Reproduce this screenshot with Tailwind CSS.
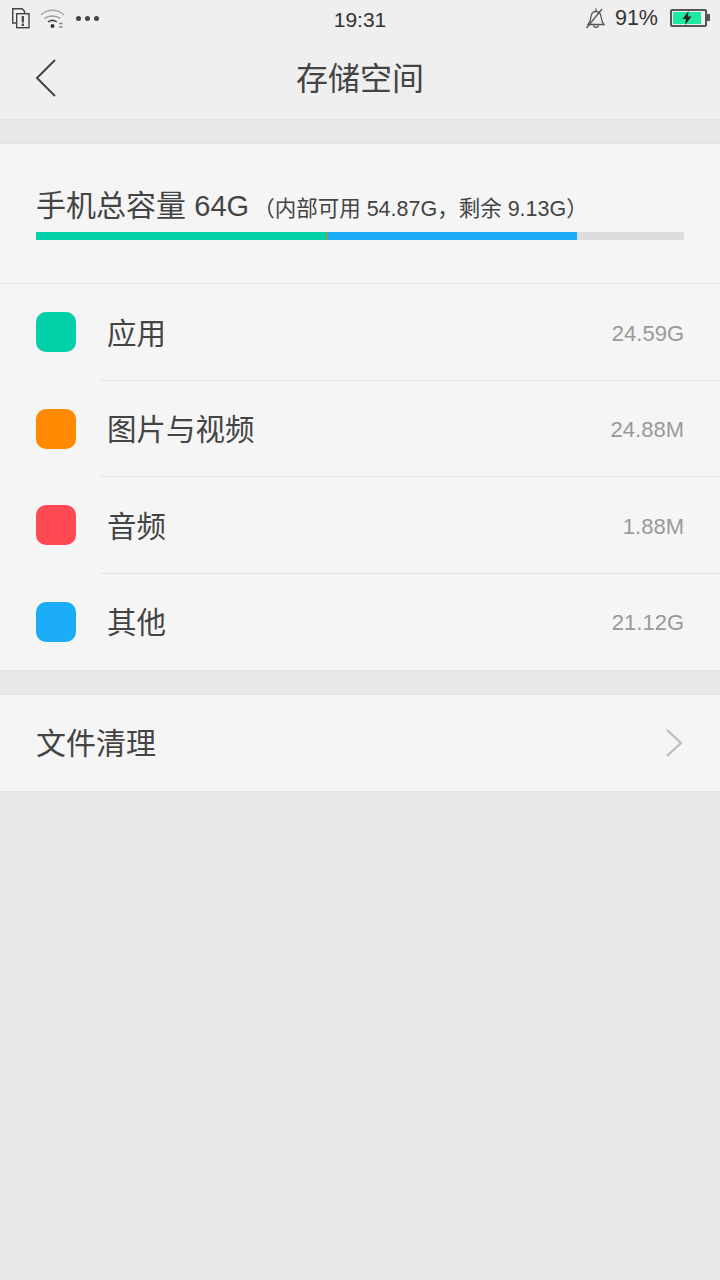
<!DOCTYPE html>
<html lang="zh">
  <head>
    <meta charset="UTF-8" />
    <meta name="viewport" content="width=device-width, initial-scale=1.0" />
    <title>存储空间</title>
    <script src="https://cdn.jsdelivr.net/npm/@tailwindcss/browser@4"></script>
  </head>
  <body class="bg-[#e8e8e8] h-[1280px] overflow-hidden font-['Liberation_Sans','Noto_Sans_CJK_SC',sans-serif] text-[#444444]">
    <header class="bg-[#efefef] h-[120px] border-b border-[#e3e3e3]">
      <div class="h-10 flex items-start justify-between relative pl-[12px] pr-[10px]">
        <div class="flex items-start pt-[8px]">
          <svg width="18" height="21" viewBox="0 0 18 21" fill="none" stroke="#444" stroke-width="1.400">
            <path d="M4 15H.7V.7H10l2.500 2.500V5" />
            <rect x="4.700" y="5.700" width="12.300" height="14" />
            <path d="M10.800 8v6.500M10.800 15.500v2.500" stroke-width="2.200" />
          </svg>
          <svg class="ml-[10px]" width="26" height="21" viewBox="0 0 26 21" fill="none" stroke="#555">
            <path d="M1 7C7 0.500 18 0.500 24 7" stroke-width="1.500" stroke="#aaa" />
            <path d="M4.500 10.500c4-3.500 11-3.500 16 0" stroke-width="1.500" stroke="#999" />
            <path d="M8 14c2.500-2 6-2 9 0" stroke-width="1.500" stroke="#444" />
            <circle cx="12.500" cy="18" r="2" fill="#333" stroke="none" />
            <path d="M19 15.500h3.500M19 19h3.500" stroke-width="1.500" stroke="#888" />
          </svg>
          <div class="ml-[10px] mt-[8px] flex gap-[4px]">
            <span class="w-[5px] h-[5px] rounded-full bg-[#444]"></span>
            <span class="w-[5px] h-[5px] rounded-full bg-[#444]"></span>
            <span class="w-[5px] h-[5px] rounded-full bg-[#444]"></span>
          </div>
        </div>
        <span class="absolute left-0 right-0 text-center text-[21px] leading-10 text-[#333]">19:31</span>
        <div class="flex items-start">
          <svg class="mt-[6px]" width="22" height="24" viewBox="0 0 22 24" fill="none" stroke="#555" stroke-width="1.300">
            <path d="M3 18.500h16c-2-2-2.500-4-2.800-7-.3-3.500-1.900-6-5.200-6-3.300 0-4.900 2.500-5.200 6-.3 3-.8 5-2.800 7z" />
            <path d="M11 2.500v3M8.500 19.500c.5 2.500 4.500 2.500 5 0M1.500 22L17 3" />
          </svg>
          <span class="ml-[8px] text-[21.500px] leading-[37px] text-[#333]">91%</span>
          <div class="ml-[12px] mt-[9px] w-[37px] h-[18px] border-2 border-[#555] rounded-[2px] p-px">
            <div class="w-[28px] h-full bg-[#1de9a0] flex items-center justify-center">
              <svg width="12" height="14" viewBox="0 0 12 14" fill="#222"><path d="M7.500 0L1.500 8h3.500L4 14l6.500-8.500H7z" /></svg>
            </div>
          </div>
          <span class="w-[3px] h-[7px] mt-[14px] bg-[#555]"></span>
        </div>
      </div>
      <div class="h-[79px] flex items-center justify-center relative">
        <svg class="absolute left-[33px] top-[18px]" width="26" height="40" viewBox="0 0 26 40" fill="none" stroke="#444" stroke-width="2">
          <path d="M22 2L4 20l18 18" />
        </svg>
        <h1 class="text-[32px] leading-10 font-normal -mt-[2px]">存储空间</h1>
      </div>
    </header>

    <section class="mt-[23px] bg-[#f5f5f5] border-t border-b border-[#e3e3e3]">
      <div class="h-[140px] px-9 pt-[42px] border-b border-[#e3e3e3]">
        <p class="h-[46px] flex items-baseline whitespace-nowrap">
          <span class="text-[30px] leading-10">手机总容量 <span class="text-[29px]">64G</span></span>
          <span class="text-[21.500px] ml-[4px]">（内部可用 54.87G，剩余 9.13G）</span>
        </p>
        <div class="h-2 bg-[#dddddd] flex">
          <div class="w-[290px] bg-[#00cfa8]"></div>
          <div class="w-[2px] bg-[#8a9a60]"></div>
          <div class="w-[249px] bg-[#1cadf8]"></div>
        </div>
      </div>
      <ul>
        <li class="h-[96.500px] flex items-center pl-9 pr-9">
          <span class="w-10 h-10 rounded-[10px] bg-[#00cfa8] shrink-0"></span>
          <span class="ml-[31px] text-[29.500px] flex-1 mt-[3px]">应用</span>
          <span class="text-[22px] text-[#999999] mt-[2px]">24.59G</span>
        </li>
        <li class="h-[96.500px] flex items-center pr-9 pl-9 relative">
          <div class="absolute -top-px left-[101px] right-0 border-t border-[#e3e3e3]"></div>
          <span class="w-10 h-10 rounded-[10px] bg-[#ff8a00] shrink-0"></span>
          <span class="ml-[31px] text-[29.500px] flex-1 mt-[3px]">图片与视频</span>
          <span class="text-[22px] text-[#999999] mt-[2px]">24.88M</span>
        </li>
        <li class="h-[96.500px] flex items-center pr-9 pl-9 relative">
          <div class="absolute -top-px left-[101px] right-0 border-t border-[#e3e3e3]"></div>
          <span class="w-10 h-10 rounded-[10px] bg-[#ff4a55] shrink-0"></span>
          <span class="ml-[31px] text-[29.500px] flex-1 mt-[3px]">音频</span>
          <span class="text-[22px] text-[#999999] mt-[2px]">1.88M</span>
        </li>
        <li class="h-[96.500px] flex items-center pr-9 pl-9 relative">
          <div class="absolute -top-px left-[101px] right-0 border-t border-[#e3e3e3]"></div>
          <span class="w-10 h-10 rounded-[10px] bg-[#1cadf8] shrink-0"></span>
          <span class="ml-[31px] text-[29.500px] flex-1 mt-[3px]">其他</span>
          <span class="text-[22px] text-[#999999] mt-[2px]">21.12G</span>
        </li>
      </ul>
    </section>

    <section class="mt-[23px] h-[98px] bg-[#f5f5f5] border-t border-b border-[#e3e3e3] flex items-center justify-between pl-9 pr-[37px]">
      <span class="text-[30px]">文件清理</span>
      <svg width="18" height="30" viewBox="0 0 18 30" fill="none" stroke="#bdbdbd" stroke-width="2.200">
        <path d="M2 2l14 13L2 28" />
      </svg>
    </section>
  </body>
</html>
